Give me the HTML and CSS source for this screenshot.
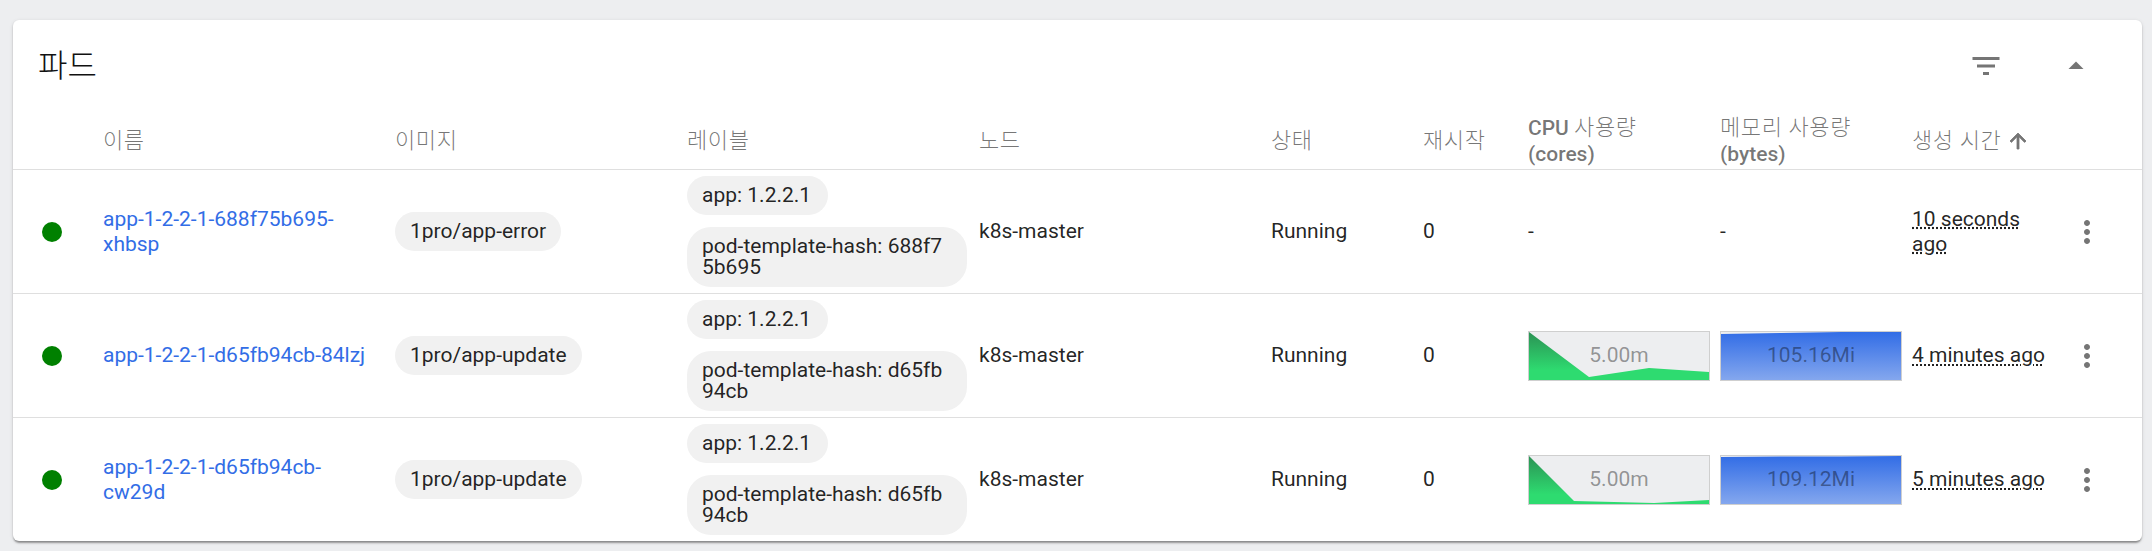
FILE: index.html
```html
<!DOCTYPE html>
<html lang="ko">
<head>
<meta charset="utf-8">
<title>파드</title>
<link rel="stylesheet" href="styles.css">
</head>
<body>
<main class="card">
  <header class="card-title">
    <h1 class="title-text">파드</h1>
    <div class="title-actions">
      <svg class="icon filter-icon" viewBox="0 0 24 24"><path d="M10 18h4v-2h-4v2zM3 6v2h18V6H3zm3 7h12v-2H6v2z"/></svg>
      <svg class="icon collapse-icon" viewBox="0 0 24 24"><path d="M7 14l5-5 5 5z"/></svg>
    </div>
  </header>

  <div class="row head">
    <span></span>
    <span class="ko">이름</span>
    <span class="ko">이미지</span>
    <span class="ko">레이블</span>
    <span class="ko">노드</span>
    <span class="ko">상태</span>
    <span class="ko">재시작</span>
    <span><b class="latin">CPU</b> <span class="ko">사용량</span><br><b class="latin">(cores)</b></span>
    <span><span class="ko">메모리 사용량</span><br><b class="latin">(bytes)</b></span>
    <span class="sorted"><span class="ko">생성 시간</span><svg class="arrow" viewBox="0 0 24 24"><path d="M4 12l1.41 1.41L11 7.83V20h2V7.83l5.58 5.59L20 12l-8-8-8 8z"/></svg></span>
    <span></span>
  </div>

  <div class="row">
    <span class="dot"></span>
    <a class="link" href="#">app-1-2-2-1-688f75b695-xhbsp</a>
    <div><span class="chip">1pro/app-error</span></div>
    <div class="chips">
      <span class="chip label">app: 1.2.2.1</span>
      <span class="chip label">pod-template-hash: 688f75b695</span>
    </div>
    <span>k8s-master</span>
    <span>Running</span>
    <span>0</span>
    <span>-</span>
    <span>-</span>
    <span class="age">10 seconds ago</span>
    <svg class="icon kebab" viewBox="0 0 24 24"><path d="M12 8c1.1 0 2-.9 2-2s-.9-2-2-2-2 .9-2 2 .9 2 2 2zm0 2c-1.1 0-2 .9-2 2s.9 2 2 2 2-.9 2-2-.9-2-2-2zm0 6c-1.1 0-2 .9-2 2s.9 2 2 2 2-.9 2-2-.9-2-2-2z"/></svg>
  </div>

  <div class="row">
    <span class="dot"></span>
    <a class="link" href="#">app-1-2-2-1-d65fb94cb-84lzj</a>
    <div><span class="chip">1pro/app-update</span></div>
    <div class="chips">
      <span class="chip label">app: 1.2.2.1</span>
      <span class="chip label">pod-template-hash: d65fb94cb</span>
    </div>
    <span>k8s-master</span>
    <span>Running</span>
    <span>0</span>
    <div class="spark cpu">
      <svg class="spark-svg" viewBox="0 0 180 48" preserveAspectRatio="none">
        <defs><linearGradient id="g1" gradientUnits="userSpaceOnUse" x1="0" y1="0" x2="0" y2="48"><stop offset="0" stop-color="#2b9254"/><stop offset="0.8" stop-color="#2edb70"/></linearGradient></defs>
        <path d="M0 0L60 45L120 36L180 40V48H0Z" fill="url(#g1)"/>
      </svg>
      <span class="spark-value">5.00m</span>
    </div>
    <div class="spark mem">
      <svg class="spark-svg" viewBox="0 0 180 48" preserveAspectRatio="none">
        <defs><linearGradient id="b1" gradientUnits="userSpaceOnUse" x1="0" y1="0" x2="0" y2="48"><stop offset="0" stop-color="#326de6"/><stop offset="1" stop-color="#84a7ee"/></linearGradient></defs>
        <path d="M0 2L60 1L120 0L180 0V48H0Z" fill="url(#b1)"/>
      </svg>
      <span class="spark-value">105.16Mi</span>
    </div>
    <span class="age">4 minutes ago</span>
    <svg class="icon kebab" viewBox="0 0 24 24"><path d="M12 8c1.1 0 2-.9 2-2s-.9-2-2-2-2 .9-2 2 .9 2 2 2zm0 2c-1.1 0-2 .9-2 2s.9 2 2 2 2-.9 2-2-.9-2-2-2zm0 6c-1.1 0-2 .9-2 2s.9 2 2 2 2-.9 2-2-.9-2-2-2z"/></svg>
  </div>

  <div class="row last">
    <span class="dot"></span>
    <a class="link" href="#">app-1-2-2-1-d65fb94cb-cw29d</a>
    <div><span class="chip">1pro/app-update</span></div>
    <div class="chips">
      <span class="chip label">app: 1.2.2.1</span>
      <span class="chip label">pod-template-hash: d65fb94cb</span>
    </div>
    <span>k8s-master</span>
    <span>Running</span>
    <span>0</span>
    <div class="spark cpu">
      <svg class="spark-svg" viewBox="0 0 180 48" preserveAspectRatio="none">
        <defs><linearGradient id="g2" gradientUnits="userSpaceOnUse" x1="0" y1="0" x2="0" y2="48"><stop offset="0" stop-color="#2b9254"/><stop offset="0.8" stop-color="#2edb70"/></linearGradient></defs>
        <path d="M0 0L45 45L125 47L180 44V48H0Z" fill="url(#g2)"/>
      </svg>
      <span class="spark-value">5.00m</span>
    </div>
    <div class="spark mem">
      <svg class="spark-svg" viewBox="0 0 180 48" preserveAspectRatio="none">
        <defs><linearGradient id="b2" gradientUnits="userSpaceOnUse" x1="0" y1="0" x2="0" y2="48"><stop offset="0" stop-color="#326de6"/><stop offset="1" stop-color="#84a7ee"/></linearGradient></defs>
        <path d="M0 1L60 0.5L120 0.5L180 0V48H0Z" fill="url(#b2)"/>
      </svg>
      <span class="spark-value">109.12Mi</span>
    </div>
    <span class="age">5 minutes ago</span>
    <svg class="icon kebab" viewBox="0 0 24 24"><path d="M12 8c1.1 0 2-.9 2-2s-.9-2-2-2-2 .9-2 2 .9 2 2 2zm0 2c-1.1 0-2 .9-2 2s.9 2 2 2 2-.9 2-2-.9-2-2-2zm0 6c-1.1 0-2 .9-2 2s.9 2 2 2 2-.9 2-2-.9-2-2-2z"/></svg>
  </div>
</main>
</body>
</html>
```

FILE: styles.css
```css
html, body {
  margin: 0;
  height: 100%;
}

body {
  background: #edeef0;
  padding: 20px 10px 10px 13px;
  box-sizing: border-box;
  font-family: Roboto, "Noto Sans CJK KR", sans-serif;
  font-size: 21px;
  line-height: 25px;
  color: rgba(0, 0, 0, 0.87);
}

.card {
  background: #fff;
  border-radius: 6px;
  box-shadow: 0 3px 2px -1px rgba(0, 0, 0, 0.3), 0 1px 2px 0 rgba(0, 0, 0, 0.14), 0 1px 4px 0 rgba(0, 0, 0, 0.1);
}

.card-title {
  display: flex;
  align-items: center;
  justify-content: space-between;
  height: 92px;
  padding: 0 48px 0 25px;
}

.title-text {
  margin: 0;
  font-size: 32px;
  font-weight: 300;
  color: #111;
  line-height: 40px;
}

.title-actions {
  display: flex;
  gap: 54px;
}

.icon {
  display: block;
  width: 36px;
  height: 36px;
  fill: #757575;
}

.row {
  display: grid;
  grid-template-columns: 90px 292px 292px 292px 292px 152px 105px 192px 192px 140px 72px;
  align-items: center;
  border-bottom: 1px solid #dfdfdf;
}

.row.last {
  border-bottom: 0;
}

.head {
  height: 57px;
  line-height: 26px;
  color: rgba(0, 0, 0, 0.54);
}

.ko {
  font-size: 22px;
  font-weight: 300;
  letter-spacing: 0.6px;
}

.latin {
  font-weight: 500;
}

.sorted {
  display: flex;
  align-items: center;
  white-space: nowrap;
}

.arrow {
  width: 24px;
  height: 24px;
  margin-left: 5px;
  fill: #757575;
  stroke: #757575;
  stroke-width: 0.8;
}

.dot {
  justify-self: start;
  margin-left: 29px;
  width: 20px;
  height: 20px;
  border-radius: 50%;
  background: #008000;
}

.link {
  color: #326de6;
  text-decoration: none;
  width: 272px;
}

.chips {
  display: flex;
  flex-direction: column;
  align-items: flex-start;
  gap: 12px;
  padding: 6px 0;
}

.chip {
  display: inline-block;
  background: #f1f1f1;
  border-radius: 24px;
  padding: 9px 15px;
  line-height: 21px;
}

.chip.label {
  max-width: 280px;
  box-sizing: border-box;
  word-break: break-all;
  padding-right: 17px;
}

.spark {
  position: relative;
  width: 182px;
  height: 50px;
  box-sizing: border-box;
  border: 1px solid #cfcfcf;
  background: #edeef0;
}

.spark-svg {
  position: absolute;
  inset: 0;
  width: 100%;
  height: 100%;
  display: block;
}

.spark-value {
  position: absolute;
  inset: 0;
  display: flex;
  align-items: center;
  justify-content: center;
  color: rgba(0, 0, 0, 0.4);
}

.age {
  width: 138px;
  text-decoration: underline dotted;
}

.kebab {
  margin-left: 17px;
}
```
